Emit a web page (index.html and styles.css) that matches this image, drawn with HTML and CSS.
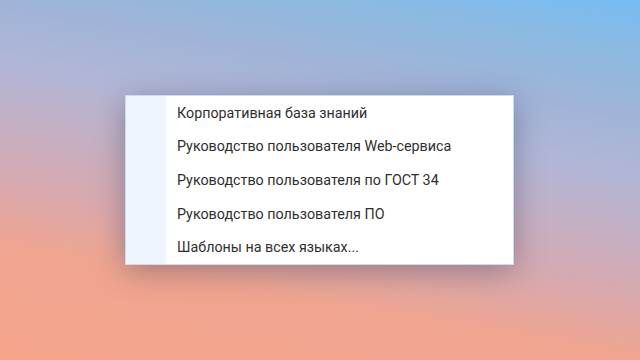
FILE: index.html
```html
<!DOCTYPE html>
<html lang="ru">
<head>
    <meta charset="UTF-8">
    <meta name="viewport" content="width=device-width, initial-scale=1.0">
    <title>Шаблоны</title>
    <link rel="stylesheet" href="styles.css">
</head>
<body>
    <div class="stage">
        <div class="menu">
            <div class="menu-gutter"></div>
            <ul class="menu-list">
                <li class="menu-item">Корпоративная база знаний</li>
                <li class="menu-item">Руководство пользователя Web-сервиса</li>
                <li class="menu-item">Руководство пользователя по ГОСТ 34</li>
                <li class="menu-item">Руководство пользователя ПО</li>
                <li class="menu-item">Шаблоны на всех языках...</li>
            </ul>
        </div>
    </div>
</body>
</html>
```

FILE: styles.css
```css
html, body {
    margin: 0;
    height: 100%;
}
body {
    font-family: Roboto, "Noto Sans", sans-serif;
    background: linear-gradient(10deg, #f6a58c 0%, #f0a590 24%, #d7a9b0 38%, #b3b6d6 62%, #9fb4d8 76%, #8db9e0 88%, #76bdf4 100%);
    overflow: hidden;
}
.stage {
    height: 100%;
    display: flex;
    align-items: flex-start;
    justify-content: flex-start;
    padding: 95px 0 0 125px;
    box-sizing: border-box;
}
.menu {
    display: flex;
    width: 389px;
    height: 170px;
    box-sizing: border-box;
    background: #fff;
    border: 1px solid #c8dcf4;
    box-shadow: 0 6px 28px rgba(50, 55, 80, 0.4);
}
.menu-gutter {
    width: 40px;
    background: #eef5fd;
}
.menu-list {
    list-style: none;
    margin: 0;
    padding: 0;
    flex: 1;
    display: flex;
    flex-direction: column;
}
.menu-item {
    flex: 1;
    display: flex;
    align-items: center;
    padding-left: 11px;
    font-size: 14.3px;
    color: #2f2f2f;
}
```
